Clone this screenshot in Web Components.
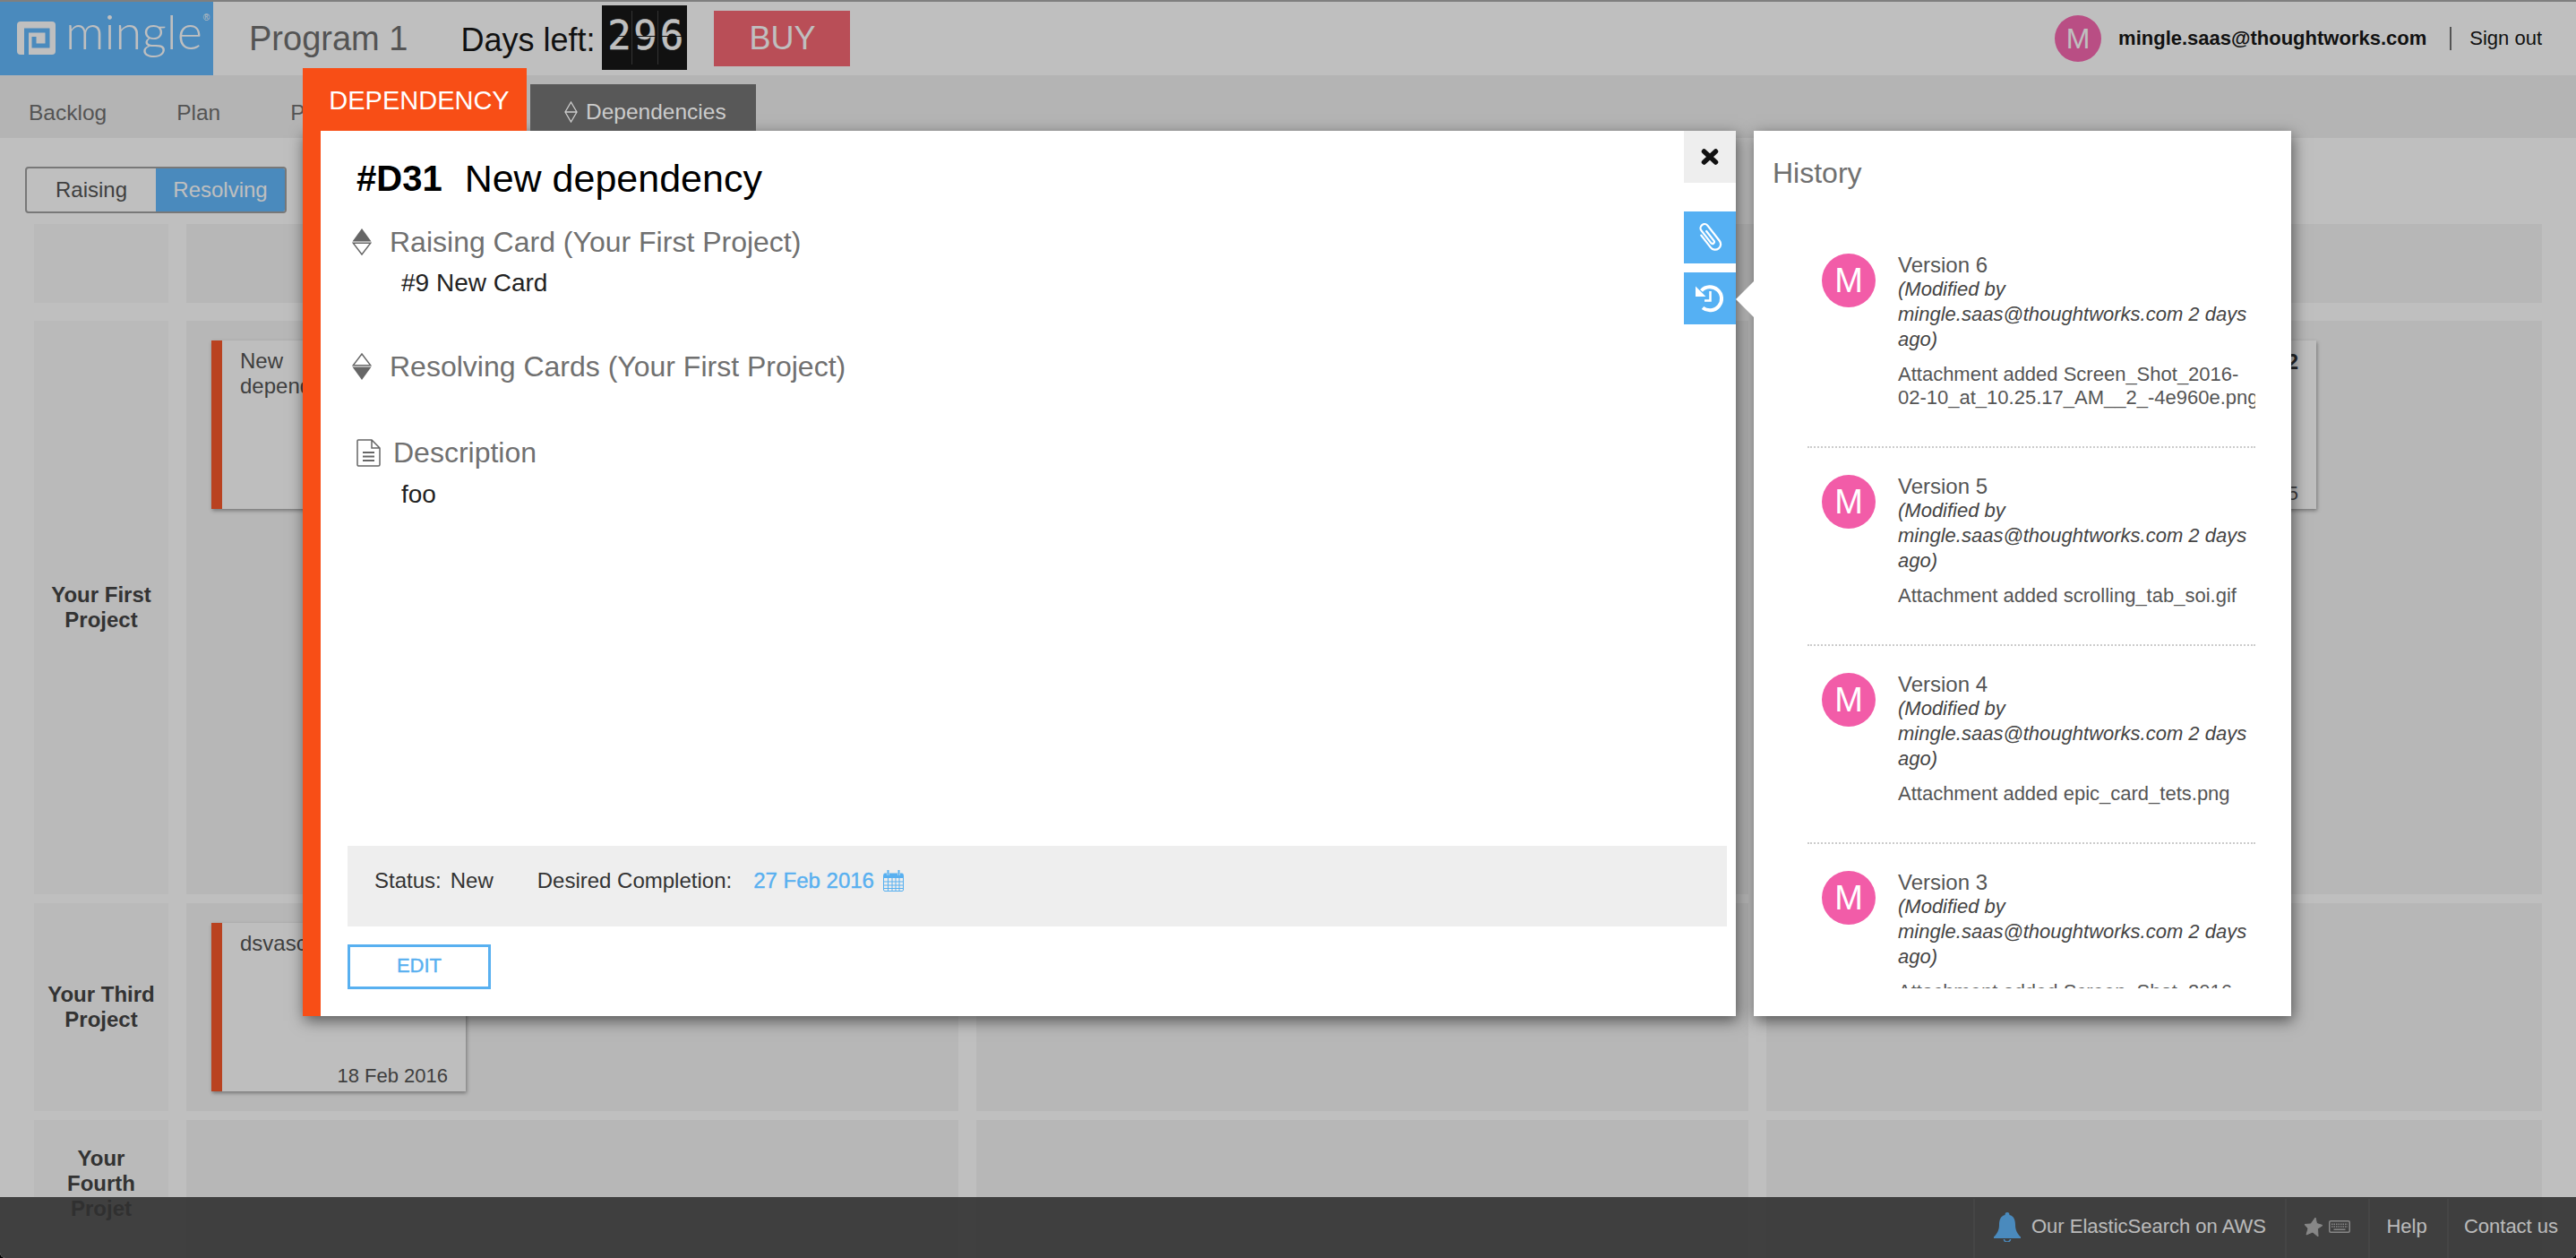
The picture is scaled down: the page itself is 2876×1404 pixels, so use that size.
<!DOCTYPE html>
<html>
<head>
<meta charset="utf-8">
<title>Mingle</title>
<style>
  html { background: #000; }
  body { margin: 0; width: 2876px; height: 1404px; overflow: hidden; font-family: "Liberation Sans", Arial, sans-serif; }
  #shell { position: relative; width: 2876px; height: 1404px; overflow: hidden; background: #fff; border-radius: 0 0 6px 6px; }
  #scrim { position: absolute; inset: 0; background: rgba(0, 0, 0, .25); }
</style>
</head>
<body>
<div id="shell">
  <mingle-header></mingle-header>
  <mingle-nav></mingle-nav>
  <view-toggle></view-toggle>
  <swim-grid>
    <lane-label style="grid-column:1"></lane-label>
    <swim-lane style="grid-column:2 / 5"></swim-lane>

    <lane-label style="grid-column:1">Your First Project</lane-label>
    <swim-lane>
      <task-card date="">New<br>dependency</task-card>
    </swim-lane>
    <swim-lane></swim-lane>
    <swim-lane>
      <task-card class="ghost"></task-card>
      <task-card date="5" heavy>2</task-card>
    </swim-lane>

    <lane-label>Your Third Project</lane-label>
    <swim-lane>
      <task-card date="18 Feb 2016">dsvasc</task-card>
    </swim-lane>
    <swim-lane></swim-lane>
    <swim-lane></swim-lane>

    <lane-label style="padding-bottom:18px">Your<br>Fourth<br>Projet</lane-label>
    <swim-lane></swim-lane>
    <swim-lane></swim-lane>
    <swim-lane></swim-lane>
  </swim-grid>
  <page-footer></page-footer>
  <div id="scrim"></div>
  <dependency-modal></dependency-modal>
  <history-panel>
    <history-item version="6" text='Attachment added Screen_Shot_2016-<span class="nb">02-10_at_10.25.17_AM__2_-4e960e.png</span>'></history-item>
    <history-item version="5" text="Attachment added scrolling_tab_soi.gif"></history-item>
    <history-item version="4" text="Attachment added epic_card_tets.png"></history-item>
    <history-item version="3" text='Attachment added Screen_Shot_2016-<span class="nb">02-10_at_10.25.17_AM.png</span>'></history-item>
  </history-panel>
</div>

<script>
// Base for all elements, each one only supplies its markup
class ShadowBase extends HTMLElement {
  constructor() {
    super();
    this.attachShadow({ mode: 'open' });
  }

  connectedCallback() {
    this.shadowRoot.innerHTML = this.markup();
  }
}

class MingleHeader extends ShadowBase {
  markup() {
    return `
      <style>
        :host { display: flex; align-items: center; height: 82px; border-top: 2px solid #aaa; background: #fff; color: #171717; }
        .logo { display: flex; flex: none; align-items: center; width: 238px; height: 82px; background: #63b8fd; color: #fff; padding-left: 19px; box-sizing: border-box; }
        .logo svg { display: block; flex: none; width: 43px; height: 37px; margin-top: -2px; }
        .word { font-family: Lato, "Liberation Sans", sans-serif; font-weight: 300; font-size: 54px; line-height: 60px; margin: -16px 0 0 11px; }
        .reg { font-size: 10px; line-height: 12px; margin: -46px 0 0 1px; }
        .program { margin-left: 40px; font-size: 38px; color: #717171; }
        .days { margin-left: 59px; font-size: 36px; margin-top: 4px; }
        .counter { display: flex; align-items: center; margin-left: 8px; height: 72px; padding: 0 3px 0 5px; margin-top: -2px; background: #171717; color: #fff; font-family: "DejaVu Sans Mono", monospace; font-size: 44px; }
        .counter span { position: relative; display: block; width: 29px; height: 60px; line-height: 56px; text-align: center; border-right: 1px solid #444; box-sizing: border-box; -webkit-text-stroke: .5px #fff; }
        .counter span:last-child { border-right: 0; }
        .counter span::after { content: ""; position: absolute; left: 1px; right: 1px; top: 28px; height: 1px; background: #171717; }
        .buy { display: flex; align-items: center; justify-content: center; margin-left: 30px; width: 152px; height: 62px; background: #f76975; color: #fff; font-size: 36px; }
        .user { display: flex; align-items: center; margin-left: auto; padding-right: 38px; }
        .avatar { width: 52px; height: 52px; border-radius: 50%; background: #f768b1; color: #fff; font-size: 32px; line-height: 52px; text-align: center; }
        .mail { margin-left: 19px; font-size: 22px; font-weight: bold; }
        .sep { width: 2px; height: 26px; margin: 0 20px 0 26px; background: #707070; }
        .out { font-size: 22px; }
      </style>
      <div class="logo">
        <svg viewBox="0 0 43 37"><rect width="43" height="37" rx="4" fill="#fff"/><path d="M10.500 37V10H34V27H19V17" fill="none" stroke="#63b8fd" stroke-width="5"/></svg>
        <span class="word">mingle</span><span class="reg">®</span>
      </div>
      <span class="program">Program 1</span>
      <span class="days">Days left:</span>
      <div class="counter"><span>2</span><span>9</span><span>6</span></div>
      <div class="buy">BUY</div>
      <div class="user">
        <div class="avatar">M</div>
        <span class="mail">mingle.saas@thoughtworks.com</span>
        <div class="sep"></div>
        <span class="out">Sign out</span>
      </div>
    `;
  }
}

class MingleNav extends ShadowBase {
  markup() {
    return `
      <style>
        :host { display: flex; align-items: center; gap: 78px; height: 70px; box-sizing: border-box; padding: 13px 0 0 32px; background: #f0f0f0; color: #717171; font-size: 24.500px; }
      </style>
      <span>Backlog</span><span>Plan</span><span>P</span>
    `;
  }
}

class ViewToggle extends ShadowBase {
  markup() {
    return `
      <style>
        :host { display: flex; width: 292px; height: 52px; margin: 32px 0 0 28px; border: 2px solid #a0a0a0; border-radius: 4px; box-sizing: border-box; font-size: 24px; overflow: hidden; }
        div { flex: 1; display: flex; align-items: center; justify-content: center; color: #555; }
        .on { background: #63b8fd; color: #fff; }
      </style>
      <div>Raising</div><div class="on">Resolving</div>
    `;
  }
}

class SwimGrid extends ShadowBase {
  markup() {
    return `
      <style>
        :host { display: grid; grid-template-columns: 150px 862px 862px 866px; grid-template-rows: 98px 640px 232px 160px; column-gap: 20px; row-gap: 10px; margin: 12px 0 0 38px; }
        ::slotted(:nth-child(-n+2)) { margin-bottom: 10px; }
      </style>
      <slot></slot>
    `;
  }
}

class LaneLabel extends ShadowBase {
  markup() {
    return `
      <style>
        :host { display: flex; align-items: center; justify-content: center; box-sizing: border-box; background: #f9f9f9; color: #444; font-size: 24px; font-weight: bold; line-height: 28px; text-align: center; }
      </style>
      <div><slot></slot></div>
    `;
  }
}

class SwimLane extends ShadowBase {
  markup() {
    return `
      <style>
        :host { display: flex; gap: 18px; padding: 22px 28px; background: #f4f4f4; box-sizing: border-box; min-width: 0; }
      </style>
      <slot></slot>
    `;
  }
}

class TaskCard extends ShadowBase {
  markup() {
    const heavy = this.hasAttribute('heavy');
    return `
      <style>
        :host { display: flex; flex-direction: column; width: 284px; height: 188px; flex: none; box-sizing: border-box; padding: 9px 20px 4px 20px; background: #fefefe; border-left: 12px solid #f7592b; box-shadow: 1px 2px 4px rgba(0,0,0,.35); color: #555; font-size: 24px; line-height: 28px; }
        .title { flex: 1; ${heavy ? 'text-align: right; font-weight: bold; color: #333; margin-top: 1px;' : ''} }
        .date { font-size: 22px; line-height: 26px; text-align: right; }
      </style>
      <div class="title"><slot></slot></div>
      <div class="date">${this.getAttribute('date') || ''}</div>
    `;
  }
}

class PageFooter extends ShadowBase {
  markup() {
    return `
      <style>
        :host { position: absolute; left: 0; right: 0; bottom: 0; height: 68px; display: flex; justify-content: flex-end; background: rgba(63,63,63,.884); color: #f9f9f9; font-size: 22px; }
        div { display: flex; align-items: center; justify-content: center; height: 66px; margin-top: 2px; padding-bottom: 4px; box-sizing: border-box; border-left: 2px solid #5c5c5c; }
        .news { width: 348px; gap: 12px; }
        .keys { width: 93px; gap: 7px; }
        .help { width: 88px; padding-right: 4px; }
        .contact { width: 144px; padding-right: 3px; }
        svg { display: block; }
      </style>
      <div class="news">
        <svg width="30" height="33" viewBox="0 0 30 33"><path d="M15 0c1.800 0 2.400 1.300 2.500 3 5 1.300 6.500 5.500 6.500 11 0 6 2.400 10 6 13.500V29H0v-1.500C3.600 24 6 20 6 14c0-5.500 1.500-9.700 6.500-11C12.600 1.300 13.200 0 15 0z" fill="#63b8fd"/><path d="M11.500 30a3.500 3 0 0 0 7 0" fill="none" stroke="#63b8fd" stroke-width="1.500"/></svg>
        <span>Our ElasticSearch on AWS</span>
      </div>
      <div class="keys">
        <svg width="20" height="21" viewBox="0 0 20 21"><path d="M12 0l1.500 6.500L20 8.500l-5.500 3.800L15 21 9 16 2 19l2-7L0 7.500l7-.5z" fill="#b4b4b4" stroke="#b4b4b4" stroke-linejoin="round"/></svg>
        <svg width="24" height="14" viewBox="0 0 24 14"><rect x=".75" y=".75" width="22.500" height="12.500" rx="1.500" fill="none" stroke="#b4b4b4" stroke-width="1.500"/><path d="M3 4.200h18M3 7h18" stroke="#b4b4b4" stroke-width="1.500" stroke-dasharray="1.500 1"/><path d="M5.500 10.200h13" stroke="#b4b4b4" stroke-width="1.500"/></svg>
      </div>
      <div class="help">Help</div>
      <div class="contact">Contact us</div>
    `;
  }
}

class DependencyModal extends ShadowBase {
  markup() {
    return `
      <style>
        :host { position: absolute; left: 338px; top: 146px; width: 1600px; height: 988px; display: flex; flex-direction: column; box-sizing: border-box; padding: 28px 10px 30px 30px; background: #fff; border-left: 20px solid #f84e16; box-shadow: 2px 5px 16px rgba(0,0,0,.55); color: #000; }
        .tab { position: absolute; top: -70px; left: -20px; width: 250px; height: 70px; box-sizing: border-box; padding: 18px 0 0 10px; text-align: center; background: #f84e16; color: #fff; font-size: 29px; line-height: 36px; }
        .dep { position: absolute; top: -52px; left: 234px; width: 252px; height: 52px; display: flex; align-items: center; box-sizing: border-box; padding: 10px 0 0 38px; gap: 9px; background: #585858; color: #ccc; font-size: 24.500px; }
        h1 { margin: 0 0 0 10px; display: flex; align-items: center; height: 50px; font-weight: normal; font-size: 43px; }
        h1 b { font-size: 40px; margin-right: 25px; }
        .head { display: flex; align-items: center; height: 40px; color: #707070; font-size: 32px; }
        .head svg { display: block; flex: none; }
        .raising { margin: 26px 0 0 5px; gap: 20px; }
        .resolving { margin: 57px 0 0 5px; gap: 20px; }
        .desc { margin: 56px 0 0 10px; gap: 14px; }
        .value { height: 32px; line-height: 32px; font-size: 28px; margin: 10px 0 0 60px; color: #222; }
        .status { margin-top: auto; height: 90px; box-sizing: border-box; padding: 23px 0 0 30px; display: flex; background: #eee; font-size: 24px; line-height: 32px; color: #333; }
        .status .gap { margin-left: 10px; }
        .status .when { margin-left: 49px; }
        .date { display: flex; align-items: center; height: 32px; margin-left: 24px; gap: 10px; color: #58b0f0; -webkit-text-stroke: .4px #58b0f0; }
        .edit { margin-top: 20px; width: 160px; height: 50px; box-sizing: border-box; border: 3px solid #58b0f0; color: #58b0f0; font-size: 22px; line-height: 42px; text-align: center; -webkit-text-stroke: .4px #58b0f0; }
        .side { position: absolute; right: 0; width: 58px; height: 58px; display: flex; align-items: center; justify-content: center; background: #55b0f3; }
        .close { top: 0; background: #eee; }
        .attach { top: 90px; }
        .history { top: 158px; }
      </style>
      <div class="tab">DEPENDENCY</div>
      <div class="dep">
        <svg width="15" height="24" viewBox="0 0 15 24"><path d="M7.500 1L14 12 7.500 23 1 12zM1 12h13" fill="none" stroke="#ccc" stroke-width="1.300"/></svg>
        <span>Dependencies</span>
      </div>
      <h1><b>#D31</b><span>New dependency</span></h1>
      <div class="head raising">
        <svg width="22" height="30" viewBox="0 0 22 30"><path d="M11 0l10.500 14.500H.5z" fill="#666"/><path d="M1.200 16.200h19.600L11 29z" fill="none" stroke="#666" stroke-width="1.500"/></svg>
        <span>Raising Card (Your First Project)</span>
      </div>
      <div class="value">#9 New Card</div>
      <div class="head resolving">
        <svg width="22" height="30" viewBox="0 0 22 30"><path d="M1.200 13.800h19.600L11 1z" fill="none" stroke="#666" stroke-width="1.500"/><path d="M11 30L.5 15.500h21z" fill="#666"/></svg>
        <span>Resolving Cards (Your First Project)</span>
      </div>
      <div class="head desc">
        <svg width="27" height="31" viewBox="0 0 27 31"><path d="M2 1h15l9 9v18.500a1.500 1.500 0 0 1-1.500 1.500h-22.500A1.500 1.500 0 0 1 1 28.500V2a1 1 0 0 1 1-1zM17 1v9h9" fill="none" stroke="#666" stroke-width="1.500"/><path d="M7 15h13M7 19.500h13M7 24h13" stroke="#666" stroke-width="2"/></svg>
        <span>Description</span>
      </div>
      <div class="value" style="margin-top:11px">foo</div>
      <div class="status">
        <span>Status:</span><span class="gap">New</span>
        <span class="when">Desired Completion:</span>
        <div class="date">
          <span>27 Feb 2016</span>
          <svg width="23" height="24" viewBox="0 0 23 24"><path d="M2 4h19a1.500 1.500 0 0 1 1.500 1.500V22a1.500 1.500 0 0 1-1.500 1.500H2A1.500 1.500 0 0 1 .5 22V5.500A1.500 1.500 0 0 1 2 4z" fill="none" stroke="#58b0f0"/><path d="M1 4h21v5H1z" fill="#58b0f0"/><path d="M1 13h21M1 17h21M1 20.500h21M5.500 9v14M10 9v14M14 9v14M18 9v14" stroke="#58b0f0"/><path d="M5.500 1v5M17.500 1v5" stroke="#eee" stroke-width="3"/><path d="M5.500 .5v5M17.500 .5v5" stroke="#58b0f0" stroke-width="2" stroke-linecap="round"/></svg>
        </div>
      </div>
      <div class="edit">EDIT</div>
      <div class="side close">
        <svg width="20" height="18" viewBox="0 0 20 18"><path d="M3.500 3l13 12M16.500 3l-13 12" stroke="#111" stroke-width="5.500" stroke-linecap="round"/></svg>
      </div>
      <div class="side attach">
        <svg width="34" height="36" viewBox="0 0 30 32"><g transform="rotate(-38 15 16)"><path d="M9.500 9v15.500a5.500 5.500 0 0 0 11 0V5.500a4 4 0 0 0-8 0V21a1.800 1.800 0 0 0 3.600 0V9" fill="none" stroke="#fff" stroke-width="2" stroke-linecap="round"/></g></svg>
      </div>
      <div class="side history">
        <svg width="32" height="32" viewBox="0 0 32 32"><path d="M6.500 7.500A13 13 0 1 1 8 26.500" fill="none" stroke="#fff" stroke-width="4"/><path d="M0 2.500v11.500h11.500z" fill="#fff"/><path d="M16.500 8v10.500H10" fill="none" stroke="#fff" stroke-width="2.500"/></svg>
      </div>
    `;
  }
}

class HistoryPanel extends ShadowBase {
  markup() {
    return `
      <style>
        :host { position: absolute; left: 1958px; top: 146px; width: 600px; height: 988px; background: #fff; box-shadow: 2px 5px 16px rgba(0,0,0,.55); }
        .arrow { position: absolute; left: -20px; top: 168px; width: 0; height: 0; border-style: solid; border-width: 20px 20px 20px 0; border-color: transparent #fff transparent transparent; }
        h2 { margin: 0; padding: 27px 0 0 21px; height: 40px; font-weight: normal; font-size: 32px; line-height: 40px; color: #707070; }
        .list { margin: 40px 0 0 60px; width: 500px; height: 850px; overflow: hidden; }
      </style>
      <div class="arrow"></div>
      <h2>History</h2>
      <div class="list"><slot></slot></div>
    `;
  }
}

class HistoryItem extends ShadowBase {
  markup() {
    return `
      <style>
        :host { display: flex; box-sizing: border-box; padding: 30px 0 41px 16px; border-bottom: 2px dotted #ccc; color: #555; font-size: 22px; }
        .avatar { flex: none; width: 60px; height: 60px; border-radius: 50%; background: #f25ca8; color: #fff; font-size: 38px; line-height: 60px; text-align: center; }
        .text { margin-left: 25px; width: 399px; }
        .ver { font-size: 24px; line-height: 26px; }
        i { display: block; line-height: 28px; color: #444; }
        .note { margin-top: 12px; line-height: 26px; }
        .nb { white-space: nowrap; }
      </style>
      <div class="avatar">M</div>
      <div class="text">
        <div class="ver">Version ${this.getAttribute('version')}</div>
        <i>(Modified by mingle.saas@thoughtworks.com 2 days ago)</i>
        <div class="note">${this.getAttribute('text')}</div>
      </div>
    `;
  }
}

customElements.define('mingle-header', MingleHeader);
customElements.define('mingle-nav', MingleNav);
customElements.define('view-toggle', ViewToggle);
customElements.define('swim-grid', SwimGrid);
customElements.define('lane-label', LaneLabel);
customElements.define('swim-lane', SwimLane);
customElements.define('task-card', TaskCard);
customElements.define('page-footer', PageFooter);
customElements.define('dependency-modal', DependencyModal);
customElements.define('history-panel', HistoryPanel);
customElements.define('history-item', HistoryItem);
</script>
</body>
</html>
